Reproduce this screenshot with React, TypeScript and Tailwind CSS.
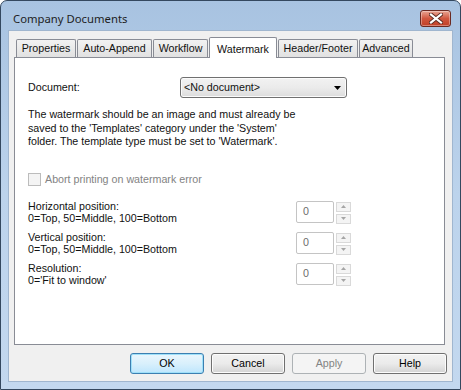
import React from 'react';

const tabs = [
  { label: 'Properties', w: 'w-[60px]' },
  { label: 'Auto-Append', w: 'w-[75px]' },
  { label: 'Workflow', w: 'w-[55px]' },
  { label: 'Watermark', w: 'w-[68px]', active: true },
  { label: 'Header/Footer', w: 'w-[80px]' },
  { label: 'Advanced', w: 'w-[54px]' },
];

const spinRows = [
  { top: 'Horizontal position:', bottom: '0=Top, 50=Middle, 100=Bottom' },
  { top: 'Vertical position:', bottom: '0=Top, 50=Middle, 100=Bottom' },
  { top: 'Resolution:', bottom: "0='Fit to window'" },
];

const CloseButton = () => (
  <div className="w-[31px] h-[17px] rounded-[3px] border border-[#6b2a22] bg-gradient-to-b from-[#e8a493] via-[#d0573f] to-[#c13f26] flex items-center justify-center shadow-[inset_0_0_0_1px_rgba(255,255,255,0.35)]">
    <svg width="14" height="11" viewBox="0 0 14 11">
      <path d="M2 1.5 L12 9.5 M12 1.5 L2 9.5" stroke="#5a2a22" strokeWidth="4" strokeLinecap="square" />
      <path d="M2 1.5 L12 9.5 M12 1.5 L2 9.5" stroke="#ffffff" strokeWidth="2.2" strokeLinecap="square" />
    </svg>
  </div>
);

const SpinBox = () => (
  <div className="flex gap-[2px]">
    <div className="w-[38px] h-[22px] border border-[#c4c4c4] rounded-[2px] bg-white flex items-center pl-[6px] text-[#6d6d6d]">
      0
    </div>
    <div className="flex flex-col gap-[2px] pt-px">
      <div className="w-[15px] h-[10px] border border-[#d9d9d9] bg-[#f4f4f4] flex items-center justify-center">
        <svg width="5" height="3" viewBox="0 0 5 3"><path d="M2.5 0 L5 3 L0 3 Z" fill="#a5a5a5" /></svg>
      </div>
      <div className="w-[15px] h-[10px] border border-[#d9d9d9] bg-[#f4f4f4] flex items-center justify-center">
        <svg width="5" height="3" viewBox="0 0 5 3"><path d="M0 0 L5 0 L2.5 3 Z" fill="#a5a5a5" /></svg>
      </div>
    </div>
  </div>
);

const DialogButton = ({ label, primary, disabled }: { label: string; primary?: boolean; disabled?: boolean }) => (
  <div
    className={
      disabled
        ? 'w-[74px] h-[21px] rounded-[3px] border border-[#adb2b5] bg-[#f4f4f4] flex items-center justify-center text-[#838383]'
        : primary
        ? 'w-[74px] h-[21px] rounded-[3px] border border-[#3c7fb1] bg-gradient-to-b from-[#eaf6fd] via-[#d9f0fc] to-[#bee6fd] flex items-center justify-center text-black shadow-[inset_0_0_0_1px_#9fe0f9]'
        : 'w-[74px] h-[21px] rounded-[3px] border border-[#707070] bg-gradient-to-b from-[#f2f2f2] via-[#ebebeb] to-[#d3d3d3] flex items-center justify-center text-black shadow-[inset_0_0_0_1px_#fcfcfc]'
    }
  >
    {label}
  </div>
);

export default function App() {
  return (
    <div className="w-[461px] h-[390px] bg-white font-['Liberation_Sans',Tahoma,sans-serif] text-[10.7px] text-[#111]">
      <div className="w-[461px] h-[390px] rounded-t-[7px] border border-[#34485f] bg-gradient-to-b from-[#a8c3e1] via-[#bcd3ec] to-[#c3d8ef] flex flex-col px-[7px] pb-[7px]">
        {/* title bar */}
        <div className="h-[29px] flex items-start justify-between">
          <div className="pl-[5px] pt-[10px] text-[11.3px] leading-[16px] font-['Noto_Sans',sans-serif] text-[#1e1e1e]">
            Company Documents
          </div>
          <div className="pt-[9px] pr-[2px]">
            <CloseButton />
          </div>
        </div>

        {/* client area */}
        <div className="flex-1 border border-[#a0b6cf] bg-[#f0f0f0] flex flex-col">
          {/* tabs */}
          <div className="h-[20px] mt-[6px] pl-[7px] flex items-end gap-px relative z-10">
            {tabs.map(t =>
              t.active ? (
                <div
                  key={t.label}
                  className={`${t.w} h-[21px] -mb-px border border-b-0 border-[#898c95] rounded-t-[2px] bg-white flex items-start justify-center pt-[3px]`}
                >
                  {t.label}
                </div>
              ) : (
                <div
                  key={t.label}
                  className={`${t.w} h-[18px] border border-b-0 border-[#898c95] rounded-t-[2px] bg-gradient-to-b from-[#f2f2f2] to-[#e1e1e1] flex items-center justify-center`}
                >
                  {t.label}
                </div>
              )
            )}
          </div>

          {/* panel */}
          <div className="h-[288px] ml-[5px] mr-[7px] border border-[#898c95] bg-white pl-[13px] pt-[19px] flex flex-col">
            <div className="flex items-center h-[21px]">
              <div className="w-[152px]">Document:</div>
              <div className="w-[167px] h-[21px] rounded-[3px] border border-[#707070] bg-gradient-to-b from-[#f2f2f2] via-[#ebebeb] to-[#dcdcdc] flex items-center justify-between pl-[3px] pr-[5px] shadow-[inset_0_0_0_1px_#fbfbfb]">
                <span>&lt;No document&gt;</span>
                <svg width="7" height="4" viewBox="0 0 7 4"><path d="M0 0 L7 0 L3.5 4 Z" fill="#000" /></svg>
              </div>
            </div>

            <p className="mt-[10px] leading-[13.5px]">
              The watermark should be an image and must already be
              <br />
              saved to the 'Templates' category under the 'System'
              <br />
              folder. The template type must be set to 'Watermark'.
            </p>

            <div className="mt-[24px] flex items-center gap-[4px] h-[13px] text-[#838383]">
              <div className="w-[13px] h-[13px] border border-[#bcbcbc] bg-[#f4f4f4]" />
              <span>Abort printing on watermark error</span>
            </div>

            <div className="mt-[15px] flex flex-col">
              {spinRows.map(r => (
                <div key={r.top} className="flex items-start h-[31px]">
                  <div className="w-[268px] leading-[12.5px] mt-[-1px]">
                    <div>{r.top}</div>
                    <div>{r.bottom}</div>
                  </div>
                  <SpinBox />
                </div>
              ))}
            </div>
          </div>

          {/* dialog buttons */}
          <div className="mt-[8px] pl-[121px] flex gap-[7px]">
            <DialogButton label="OK" primary />
            <DialogButton label="Cancel" />
            <DialogButton label="Apply" disabled />
            <DialogButton label="Help" />
          </div>
        </div>
      </div>
    </div>
  );
}
